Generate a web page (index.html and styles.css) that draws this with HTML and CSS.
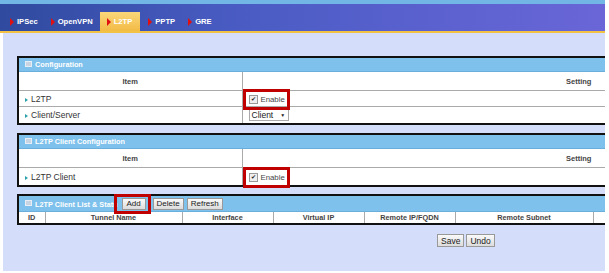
FILE: index.html
```html
<!DOCTYPE html>
<html>
<head>
<meta charset="utf-8">
<link rel="stylesheet" href="styles.css">
</head>
<body>
<div class="screen">
  <div class="topstrip"></div>
  <div class="tabbar">
    <div class="tab"><span class="tri"></span>IPSec</div>
    <div class="tab"><span class="tri"></span>OpenVPN</div>
    <div class="tab active"><span class="tri"></span>L2TP</div>
    <div class="tab"><span class="tri"></span>PPTP</div>
    <div class="tab"><span class="tri"></span>GRE</div>
  </div>
  <div class="content">
    <table class="panel t1">
      <colgroup><col class="k1"><col class="k2"></colgroup>
      <tr class="hdr"><td colspan="2"><span class="ico"></span>Configuration</td></tr>
      <tr class="colhdr"><td class="c1">Item</td><td class="c2">Setting</td></tr>
      <tr class="row r-a"><td class="c1"><span class="arr"></span>L2TP</td><td class="c2 vis"><span class="en"><span class="cb">✔</span>Enable<span class="anno"></span></span></td></tr>
      <tr class="row r-b"><td class="c1"><span class="arr"></span>Client/Server</td><td class="c2"><span class="sel">Client<span class="dd">▼</span></span></td></tr>
    </table>

    <table class="panel t2">
      <colgroup><col class="k1"><col class="k2"></colgroup>
      <tr class="hdr"><td colspan="2"><span class="ico"></span>L2TP Client Configuration</td></tr>
      <tr class="colhdr"><td class="c1">Item</td><td class="c2">Setting</td></tr>
      <tr class="row r-c"><td class="c1"><span class="arr"></span>L2TP Client</td><td class="c2 vis"><span class="en"><span class="cb">✔</span>Enable<span class="anno"></span></span></td></tr>
    </table>

    <table class="panel t3">
      <colgroup>
        <col class="w-id"><col class="w-tn"><col class="w-if"><col class="w-vi"><col class="w-ri"><col class="w-rs"><col class="w-x">
      </colgroup>
      <tr class="hdr"><td colspan="7" class="vis"><span class="ico"></span><span class="ttl">L2TP Client List &amp; Statu</span><span class="btnwrap"><button class="btn">Add</button><span class="anno anno-add"></span></span><button class="btn">Delete</button><button class="btn">Refresh</button></td></tr>
      <tr class="lh">
        <td>ID</td>
        <td>Tunnel Name</td>
        <td>Interface</td>
        <td>Virtual IP</td>
        <td>Remote IP/FQDN</td>
        <td>Remote Subnet</td>
        <td>&nbsp;</td>
      </tr>
    </table>

    <div class="actions">
      <button class="btn">Save</button><button class="btn">Undo</button>
    </div>
  </div>
</div>
</body>
</html>
```

FILE: styles.css
```css
html, body {
  margin: 0;
  padding: 0;
  background: #ffffff;
}
.screen {
  width: 605px;
  height: 271px;
  overflow: hidden;
  font-family: "Liberation Sans", Arial, sans-serif;
  font-size: 8.5px;
  color: #333;
}
.topstrip {
  height: 4px;
  background: #72b6e6;
}
.tabbar {
  height: 27px;
  background: linear-gradient(90deg, #2f4a9e 0%, #4a5cc4 40%, #6a66d8 100%);
  border-bottom: 2px solid #f2c244;
  display: flex;
  align-items: flex-end;
  padding-left: 10px;
}
.tab {
  height: 19px;
  display: flex;
  align-items: center;
  color: #fff;
  font-weight: bold;
  font-size: 7.6px;
  margin-right: 13px;
}
.tab.active {
  background: linear-gradient(180deg, #fbd77a 0%, #f2bb45 100%);
  padding: 0 8px 0 7px;
  margin: 0 8px 0 -6px;
}
.tri {
  display: inline-block;
  width: 0;
  height: 0;
  border-top: 4px solid transparent;
  border-bottom: 4px solid transparent;
  border-left: 4px solid #e01010;
  margin-right: 3px;
}
.content {
  margin-left: 3px;
  background: #d4ddfa;
  height: 238px;
  padding: 23px 0 0 14px;
  box-sizing: border-box;
  overflow: hidden;
}
.panel {
  width: 900px;
  border-collapse: collapse;
  border: 2px solid #111;
  background: #fff;
  table-layout: fixed;
}
.panel td {
  padding: 0;
  overflow: hidden;
  white-space: nowrap;
}
.panel td.vis {
  overflow: visible;
}
.k1 { width: 224px; }
.hdr td {
  background: #7ec1ec;
  color: #fff;
  font-weight: bold;
  font-size: 7.3px;
  height: 13px;
  padding-left: 6px;
  border-bottom: 1px solid #6aaedc;
}
.ico {
  display: inline-block;
  width: 5px;
  height: 4px;
  background: #c9d4e2;
  border: 1px solid #e8eef6;
  margin-right: 3px;
  vertical-align: 0px;
}
.c1 {
  border-right: 1px solid #aaa;
}
.colhdr td {
  height: 18px;
  text-align: center;
  color: #444;
  font-weight: bold;
  font-size: 7.5px;
  border-bottom: 1px solid #aaa;
}
.row td {
  height: 15px;
  border-bottom: 1px solid #aaa;
  color: #333;
}
.t1 .r-b td {
  height: 16px;
  border-bottom: none;
}
.t2 .r-c td {
  height: 17px;
  border-bottom: none;
}
.row .c1 {
  padding-left: 6px;
}
.row .c2 {
  padding-left: 6px;
}
.arr {
  display: inline-block;
  width: 0;
  height: 0;
  border-top: 2.5px solid transparent;
  border-bottom: 2.5px solid transparent;
  border-left: 3px solid #2aa0a8;
  margin-right: 3px;
  vertical-align: 0px;
}
.en {
  position: relative;
  display: inline-flex;
  align-items: center;
  color: #444;
  font-size: 7.8px;
}
.cb {
  display: inline-block;
  width: 7px;
  height: 7px;
  border: 1px solid #999;
  background: #eee;
  font-size: 6px;
  line-height: 7px;
  text-align: center;
  color: #222;
  margin-right: 3px;
}
.anno {
  position: absolute;
  left: -6px;
  top: -6px;
  width: 47px;
  height: 21px;
  border: 3px solid #c00000;
  box-sizing: border-box;
}
.sel {
  display: inline-flex;
  align-items: center;
  border: 1px solid #aaa;
  height: 10px;
  padding: 0 3px 0 2px;
  color: #222;
  font-size: 8.5px;
  background: #fff;
}
.dd {
  font-size: 5px;
  margin-left: 7px;
}
.t2 {
  margin-top: 8px;
}
.t3 {
  margin-top: 7px;
}
.t3 .hdr td {
  height: 14px;
  padding-top: 1px;
}
.ttl {
  display: inline-block;
  vertical-align: middle;
}
.btnwrap {
  position: relative;
  display: inline-block;
  margin-left: 4px;
  vertical-align: middle;
}
.btn {
  font-family: "Liberation Sans", Arial, sans-serif;
  font-size: 8px;
  color: #222;
  height: 12px;
  line-height: 10px;
  padding: 0 3px;
  border: 1px solid #999;
  background: linear-gradient(180deg, #fafafa 0%, #dcdcdc 100%);
  margin: 0 3px 0 0;
  vertical-align: middle;
}
.btnwrap .btn {
  display: block;
  margin-right: 0;
  width: 24px;
  padding: 0;
}
.anno-add {
  left: -8px;
  top: -4px;
  width: 37px;
  height: 20px;
}
.btnwrap + .btn {
  margin-left: 7px;
}
.lh td {
  height: 11px;
  text-align: center;
  color: #444;
  font-weight: bold;
  font-size: 7.3px;
  border-right: 1px solid #aaa;
}
.w-id { width: 27px; }
.w-tn { width: 137px; }
.w-if { width: 91px; }
.w-vi { width: 91px; }
.w-ri { width: 91px; }
.w-rs { width: 138px; }
.actions {
  display: flex;
  padding-left: 420px;
  margin-top: 9px;
}
.actions .btn {
  height: 13px;
  margin-right: 2px;
  padding: 0 3px;
  font-size: 8.5px;
}
```
